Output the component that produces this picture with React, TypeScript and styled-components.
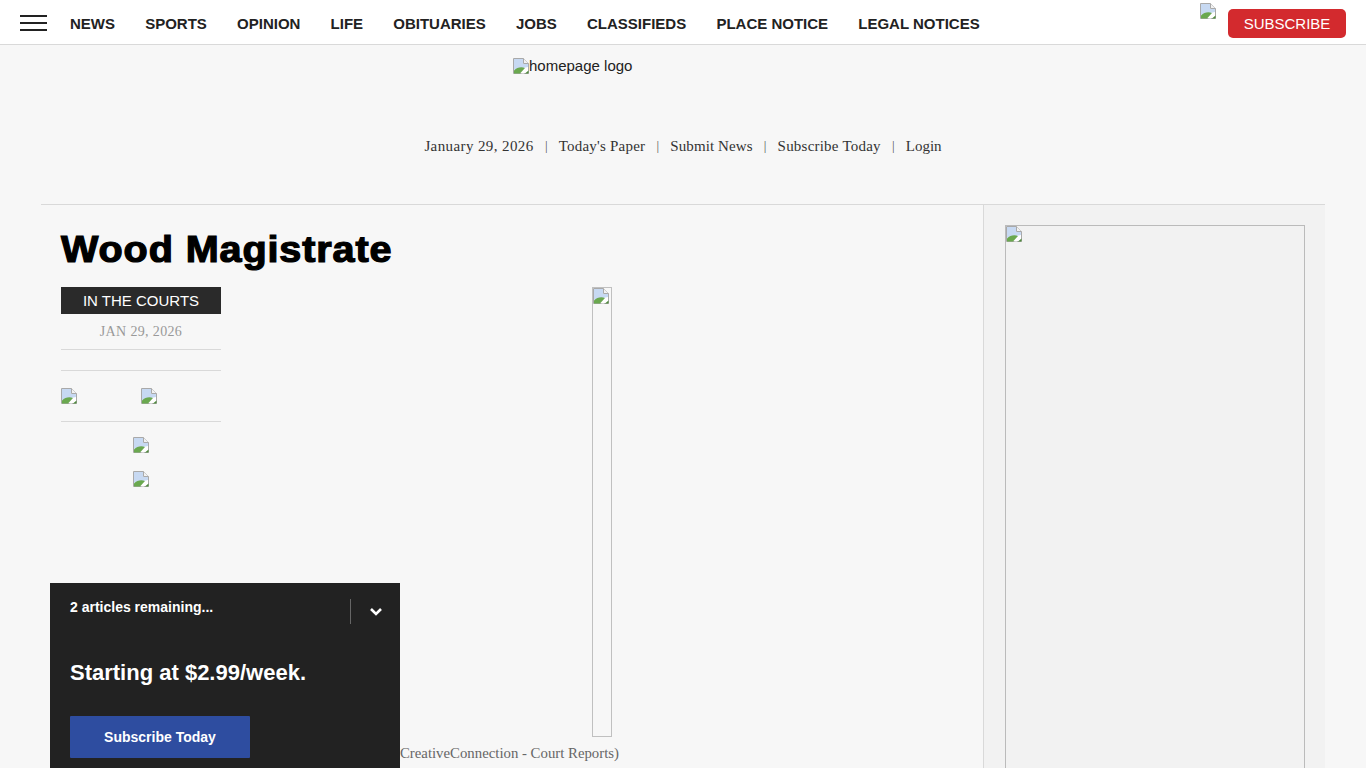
import React from "react";
import styled, { createGlobalStyle } from "styled-components";

const Global = createGlobalStyle`
  html, body { margin: 0; padding: 0; height: 100%; overflow: hidden; background: #f7f7f7; }
  * { box-sizing: border-box; }
  #root { height: 100vh; overflow: hidden; font-family: "Liberation Sans", Arial, sans-serif; }
`;

const serif = `"Liberation Serif", "Times New Roman", serif`;

const TopBar = styled.header`
  height: 45px;
  background: #fff;
  border-bottom: 1px solid #d9d9d9;
  display: flex;
  align-items: flex-start;
  padding: 0 20px;
`;
const Burger = styled.div`
  width: 27px;
  height: 16px;
  margin-top: 15px;
  margin-right: 23px;
  display: flex;
  flex-direction: column;
  justify-content: space-between;
`;
const BurgerLine = styled.span`
  display: block;
  height: 2px;
  background: #222;
`;
const Nav = styled.nav`
  display: flex;
  gap: 30.2px;
  height: 44px;
  padding-top: 2px;
  align-items: center;
  flex: 1;
`;
const NavLink = styled.a`
  font-size: 15px;
  font-weight: 700;
  color: #222;
  white-space: nowrap;
`;
const TopRight = styled.div`
  display: flex;
  align-items: flex-start;
  gap: 12px;
`;
const AccountSlot = styled.div`
  margin-top: 3px;
  line-height: 0;
`;
const SubscribeBtn = styled.a`
  margin-top: 9px;
  width: 118px;
  height: 29px;
  border-radius: 5px;
  background: #d32a2e;
  color: #fff;
  font-size: 15px;
  display: flex;
  align-items: center;
  justify-content: center;
`;
const Masthead = styled.div`
  height: 159px;
  display: flex;
  flex-direction: column;
  align-items: center;
`;
const LogoBox = styled.div`
  width: 340px;
  margin-top: 13px;
  height: 16px;
  display: flex;
  align-items: center;
  font-size: 15px;
  color: #222;
  line-height: 16px;
`;
const UtilRow = styled.div`
  margin-top: 62px;
  display: flex;
  align-items: center;
  font-family: ${serif};
  font-size: 15px;
  color: #333;
  line-height: 20px;
`;
const UtilItem = styled.span<{ $spacing: number }>`
  letter-spacing: ${(p) => p.$spacing}px;
`;
const Sep = styled.span`
  margin: 0 11.2px;
  color: #555;
  font-size: 13px;
`;
const Wrap = styled.div`
  margin: 0 41px;
  border-top: 1px solid #d9d9d9;
  display: flex;
  align-items: stretch;
  height: 700px;
`;
const MainCol = styled.main`
  width: 942px;
  padding: 20px 0 0 20px;
  flex-shrink: 0;
`;
const Title = styled.h1`
  margin: 0;
  font-size: 36px;
  line-height: 50px;
  height: 62px;
  font-weight: 700;
  color: #000;
  letter-spacing: 0.8px;
  -webkit-text-stroke: 1.2px #000;
  white-space: nowrap;
  transform: scaleX(1.1);
  transform-origin: left center;
`;
const Columns = styled.div`
  display: flex;
`;
const Meta = styled.aside`
  width: 160px;
  flex-shrink: 0;
`;
const Tag = styled.div`
  height: 27px;
  background: #2a2a2a;
  color: #fff;
  font-size: 15px;
  display: flex;
  align-items: center;
  justify-content: center;
`;
const DateLine = styled.div`
  height: 36px;
  border-bottom: 1px solid #d9d9d9;
  font-family: ${serif};
  font-size: 14px;
  letter-spacing: 0.35px;
  color: #999;
  text-align: center;
  line-height: 35px;
`;
const Share = styled.div`
  margin-top: 20px;
  height: 52px;
  border-top: 1px solid #d9d9d9;
  border-bottom: 1px solid #d9d9d9;
  padding-top: 17px;
  display: grid;
  grid-template-columns: 80px 80px;
  line-height: 0;
`;
const Stack = styled.div`
  margin-top: 15px;
  display: flex;
  flex-direction: column;
  align-items: center;
  gap: 18px;
  line-height: 0;
`;
const Body = styled.div`
  flex: 1;
  min-width: 0;
  display: flex;
  flex-direction: column;
`;
const Photo = styled.div`
  align-self: center;
  width: 20px;
  height: 450px;
  border: 1px solid #c0c0c0;
  line-height: 0;
`;
const Caption = styled.div`
  width: 398px;
  text-align: right;
  font-family: ${serif};
  font-size: 14.8px;
  color: #666;
  line-height: 20px;
  margin-top: 6px;
  white-space: nowrap;
`;
const SideCol = styled.aside`
  flex: 1;
  background: #f2f2f2;
  border-left: 1px solid #d9d9d9;
  padding: 20px 20px 0 21px;
`;
const AdBox = styled.div`
  width: 300px;
  height: 600px;
  border: 1px solid #bbb;
  line-height: 0;
`;
const Paywall = styled.section`
  position: fixed;
  left: 50px;
  bottom: 0;
  width: 350px;
  height: 185px;
  background: #222;
  color: #fff;
  padding: 16px 20px 0;
  z-index: 5;
`;
const PanelHead = styled.div`
  display: flex;
  justify-content: space-between;
  align-items: flex-start;
  height: 41px;
`;
const Remaining = styled.div`
  font-size: 14px;
  font-weight: 700;
  line-height: 17px;
`;
const Toggle = styled.div`
  width: 50px;
  height: 25px;
  margin-right: -20px;
  border-left: 1px solid #666;
  display: flex;
  align-items: center;
  justify-content: center;
  padding-top: 1px;
`;
const Offer = styled.div`
  margin-top: 20px;
  font-size: 22px;
  font-weight: 700;
  line-height: 26px;
`;
const PanelBtn = styled.a`
  margin-top: 30px;
  width: 180px;
  height: 42px;
  border-radius: 1px;
  background: #2e4da0;
  color: #fff;
  font-size: 14px;
  font-weight: 700;
  display: flex;
  align-items: center;
  justify-content: center;
`;

const Broken = () => (
  <svg width="16" height="16" viewBox="0 0 16 16" aria-hidden="true">
    <path d="M0.5 0.5H10.5L15.5 5.5V15.5H0.5Z" fill="#fff" stroke="#a9a9a9" />
    <path d="M10.5 0.5V5.5H15.5" fill="#f2f2f2" stroke="#a9a9a9" />
    <path d="M1 1H10V6H15V9L1 12Z" fill="#c7d9f2" />
    <path d="M1 15.5V12.5C4 9.5 8 8.5 12 10L7 15.5Z" fill="#6aa84f" />
    <path d="M8 15.5L15 9.5V11.5L11 15.5Z" fill="#fff" />
    <path d="M12 15.5L15.5 12.5V15.5Z" fill="#4f8a3c" />
  </svg>
);

const links = ["NEWS", "SPORTS", "OPINION", "LIFE", "OBITUARIES", "JOBS", "CLASSIFIEDS", "PLACE NOTICE", "LEGAL NOTICES"];
const util = [
  { text: "January 29, 2026", spacing: 0.4 },
  { text: "Today's Paper", spacing: 0.22 },
  { text: "Submit News", spacing: 0.1 },
  { text: "Subscribe Today", spacing: 0.22 },
  { text: "Login", spacing: 0 },
];

export default function App() {
  return (
    <>
      <Global />
      <TopBar>
        <Burger>
          <BurgerLine />
          <BurgerLine />
          <BurgerLine />
        </Burger>
        <Nav>
          {links.map((l) => (
            <NavLink key={l}>{l}</NavLink>
          ))}
        </Nav>
        <TopRight>
          <AccountSlot>
            <Broken />
          </AccountSlot>
          <SubscribeBtn>SUBSCRIBE</SubscribeBtn>
        </TopRight>
      </TopBar>
      <Masthead>
        <LogoBox>
          <Broken />
          homepage logo
        </LogoBox>
        <UtilRow>
          {util.map((u, i) => (
            <React.Fragment key={u.text}>
              {i > 0 && <Sep>|</Sep>}
              <UtilItem $spacing={u.spacing}>{u.text}</UtilItem>
            </React.Fragment>
          ))}
        </UtilRow>
      </Masthead>
      <Wrap>
        <MainCol>
          <Title>Wood Magistrate</Title>
          <Columns>
            <Meta>
              <Tag>IN THE COURTS</Tag>
              <DateLine>JAN 29, 2026</DateLine>
              <Share>
                <div><Broken /></div>
                <div><Broken /></div>
              </Share>
              <Stack>
                <Broken />
                <Broken />
              </Stack>
            </Meta>
            <Body>
              <Photo>
                <Broken />
              </Photo>
              <Caption>(CreativeConnection - Court Reports)</Caption>
            </Body>
          </Columns>
        </MainCol>
        <SideCol>
          <AdBox>
            <Broken />
          </AdBox>
        </SideCol>
      </Wrap>
      <Paywall>
        <PanelHead>
          <Remaining>2 articles remaining...</Remaining>
          <Toggle>
            <svg width="14" height="10" viewBox="0 0 14 10" aria-hidden="true">
              <path d="M2 2L7 7L12 2" fill="none" stroke="#fff" strokeWidth="2.6" />
            </svg>
          </Toggle>
        </PanelHead>
        <Offer>Starting at $2.99/week.</Offer>
        <PanelBtn>Subscribe Today</PanelBtn>
      </Paywall>
    </>
  );
}
